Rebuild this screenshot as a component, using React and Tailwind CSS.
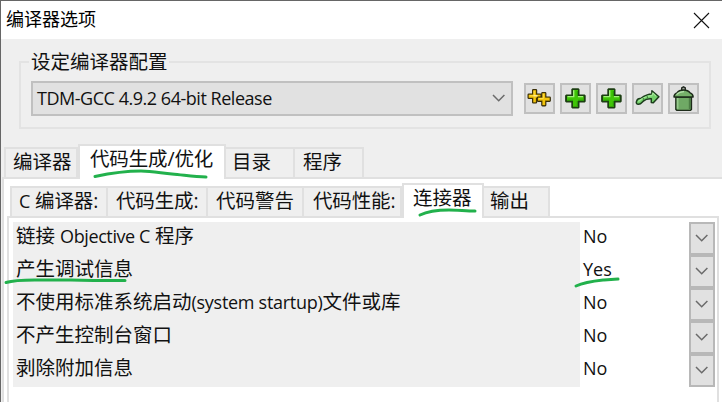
const CHEVRON = "m1 1 5.7 5.700L12.400 1";

function Chevron({ className = "" }) {
  return (
    <svg width="14" height="9" viewBox="0 0 14 9" fill="none" className={className}>
      <path d={CHEVRON} stroke="#6a6a6a" strokeWidth="1.5" />
    </svg>
  );
}

function Latin({ children, className = "" }) {
  return <span className={`text-[18px] ${className}`}>{children}</span>;
}

function IconButton({ children }) {
  return (
    <button className="flex h-[31px] w-[31px] items-center justify-center border-2 border-[#c0c0c0] bg-[#e1e1e1]">
      <svg width="25" height="25" viewBox="0 0 25 25" className="shrink-0">{children}</svg>
    </button>
  );
}

function PlusIcon() {
  return (
    <>
      <path d="M9.3 2.2h6.2l1 1v5.200h5.200l1 1v6l-1 1h-5.200v5.200l-1 1H9.3l-1-1v-5.200h-5.200l-1-1v-6l1-1h5.200V3.200z" fill="#1c3f12" />
      <path d="M10 3.900h5v6h5.800v4.800H15v6h-5v-6H4v-4.800h6z" fill="#40c507" />
      <path d="M10.700 4.300v6.300H4.600M15 10.600h5" fill="none" stroke="#a2f07c" strokeWidth="1.4" />
      <path d="M14.4 5v5m0 5v5.2M15 14.3h5.500M4.500 14.300H10" fill="none" stroke="#27980a" strokeWidth="1.1" />
    </>
  );
}

function DoublePlusIcon() {
  const cross = "M5.700 0h2.600v4.500h4.500v2.900H8.300v4.500H5.700V7.400H1.200V4.500h4.500z";
  return (
    <>
      {[[0.6, 4.3], [9.8, 7.2]].map(([x, y]) => (
        <g key={x} transform={`translate(${x} ${y})`}>
          <path d={cross} fill="#332a08" stroke="#332a08" strokeWidth="2.600" strokeLinejoin="round" />
          <path d={cross} fill="#f2c40b" stroke="#e3b50b" strokeWidth=".3" />
          <path d="M6.500.6v4.800H2" fill="none" stroke="#ffe04a" strokeWidth="1" />
        </g>
      ))}
      <path d="M6.600 9.800h4" stroke="#fff3b0" strokeWidth="1.200" />
    </>
  );
}

function ArrowIcon() {
  return (
    <>
      <path d="M1.600 15c.6-1.800 2-2.700 4-2.500 3.600-2.500 6.600-4.400 11.300-4.400V4.700l7 6-5.600 6.100-2-.4v-3.600c-3.600-.2-6 .4-8 2.300-1.500 1.500-2.600 3.300-4.800 3.200-1.900-.2-2.700-1.300-1.900-3.300z" fill="#72cf69" stroke="#1c3d1c" strokeWidth="1.500" strokeLinejoin="round" />
      <path d="M3.400 15.500c3.600-3.300 7.500-5.700 13.500-5.900l1-2.500 3 3" fill="none" stroke="#a5eb9b" strokeWidth="1.100" />
      <path d="m8 11.800.8 2M12 9.800l.6 2.500" stroke="#397b35" strokeWidth="1" />
    </>
  );
}

function BinIcon() {
  return (
    <>
      <path d="M10.700 4.200V1.900l1.800-1 1.800 1v2.300" fill="#a0a79c" stroke="#202820" strokeWidth="1.400" />
      <path d="M4.900 11h15.500v12.500l-1.200 1H6.100l-1.200-1z" fill="#6fa965" stroke="#1d2b1a" strokeWidth="1.500" />
      <path d="M6.600 12v10.800" stroke="#98cb8f" strokeWidth="1.800" />
      <path d="M18.700 12v11" stroke="#4c7d45" strokeWidth="1.800" />
      <path d="M3 11c.1-2.400 1-3.500 3-4.100 1.400-2 3-2.900 6.500-2.900s5.200.9 6.600 2.900c2 .6 2.900 1.700 3 4.100z" fill="#76b06a" stroke="#1d2b1a" strokeWidth="1.500" strokeLinejoin="round" />
      <path d="M5.500 8.600c2-2.100 4-2.900 7.500-2.900" fill="none" stroke="#b4dfaa" strokeWidth="1.300" />
    </>
  );
}

const base = "shrink-0 whitespace-nowrap border-t-2 border-r-2 border-[#e0e0e0] ";

function Tab({ children, className }) {
  return <div className={base + className}>{children}</div>;
}

const options = [
  [<>链接 <Latin className="tracking-[-0.4px]">Objective C</Latin> 程序</>, "No"],
  ["产生调试信息", "Yes"],
  [<>不使用标准系统启动<Latin className="tracking-[-0.28px]">(system startup)</Latin>文件或库</>, "No"],
  ["不产生控制台窗口", "No"],
  ["剥除附加信息", "No"],
];

function Annotations() {
  return (
    <svg className="pointer-events-none absolute -left-px -top-px z-20" width="722" height="402" fill="none" stroke="#22b14c" strokeWidth="3" strokeLinecap="round" strokeLinejoin="round">
      <path d="M95 176.500c14-3 29-5.500 46-5.500 11 0 20 2 31 3 12 1 22 3 34 3" />
      <path d="M420 215c8-4 18-5 29-5 9 0 17 1 26 1" />
      <path d="M6 282.500c10-3 23-2.500 35-2.500h30c18 .5 36 .5 54 .5" />
      <path d="M576 286c9-4 19-5 28-6l14-1" />
    </svg>
  );
}

export default function App() {
  return (
    <div className="relative flex h-[402px] w-[722px] flex-col overflow-hidden border-l border-t border-[#666] bg-[#efefef] font-['Open_Sans','Noto_Sans_CJK_SC',sans-serif] text-[19.5px] text-[#111]">
      <header className="flex h-[38px] shrink-0 items-center justify-between bg-white pl-[5px] pr-[12px]">
        <h1 className="text-[18px] leading-[34px] -mt-[3px] text-black">编译器选项</h1>
        <svg width="17" height="17" viewBox="0 0 17 17" stroke="#111" strokeWidth="1.1"><path d="m1 1 15 15M16 1 1 16" /></svg>
      </header>

      <section className="ml-[18px] mt-[22px] h-[68px] w-[692px] shrink-0 border-2 border-[#e3e3e3]">
        <div className="-mt-[13px] ml-[8px] h-[24px] w-[140px] whitespace-nowrap bg-[#efefef] pl-[2px] leading-[23px]">设定编译器配置</div>
        <div className="ml-[10px] mt-[7px] flex items-center">
          <div className="flex h-[35px] w-[482px] items-center justify-between border-2 border-[#c0c0c0] bg-[#e1e1e1] pl-[4px] pr-[5px]">
            <Latin className="tracking-[-0.47px]">TDM-GCC 4.9.2 64-bit Release</Latin>
            <Chevron />
          </div>
          <div className="ml-[11px] flex gap-[5px]">
            <IconButton><DoublePlusIcon /></IconButton>
            <IconButton><PlusIcon /></IconButton>
            <IconButton><PlusIcon /></IconButton>
            <IconButton><ArrowIcon /></IconButton>
            <IconButton><BinIcon /></IconButton>
          </div>
        </div>
      </section>

      <nav className="relative z-10 -mb-[2px] ml-[3px] mt-[15px] flex h-[35px] shrink-0 items-end leading-[26px]">
        <Tab className="h-[32px] w-[74px] border-b-2 border-l-2 border-r-0 pl-[7px]">编译器</Tab>
        <Tab className="h-[35px] w-[148px] border-l-2 bg-white pl-[10px] tracking-[-0.15px]">代码生成/优化</Tab>
        <Tab className="h-[32px] w-[69px] border-b-2 pl-[6px]">目录</Tab>
        <Tab className="h-[32px] w-[69px] border-b-2 pl-[8px]">程序</Tab>
      </nav>

      <main className="ml-[1px] flex grow flex-col border-l-2 border-t-2 border-[#e0e0e0] bg-white">
        <nav className="relative z-10 -mb-[2px] ml-[6px] mt-[4px] flex h-[35px] shrink-0 items-end leading-[26px]">
          <Tab className="h-[32px] w-[98px] border-b-2 border-l-2 bg-[#efefef] pl-[7px] tracking-[-0.15px]"><Latin>C</Latin> 编译器:</Tab>
          <Tab className="h-[32px] w-[100px] border-b-2 bg-[#efefef] pl-[8px] tracking-[-0.15px]">代码生成:</Tab>
          <Tab className="h-[32px] w-[96px] border-b-2 bg-[#efefef] pl-[8px]">代码警告</Tab>
          <Tab className="h-[32px] w-[98px] border-b-2 border-r-0 bg-[#efefef] pl-[9px] tracking-[-0.15px]">代码性能:</Tab>
          <Tab className="h-[35px] w-[82px] border-l-2 bg-white pl-[9px]">连接器</Tab>
          <Tab className="h-[32px] w-[66px] border-b-2 bg-[#efefef] pl-[6px]">输出</Tab>
        </nav>
        <div className="ml-[3px] mr-[3px] grow border-l-2 border-r-2 border-t-2 border-[#e0e0e0] pl-[4px] pr-[2px] pt-[4px]">
          {options.map(([label, value], i) => (
            <div key={i} className="flex h-[33px]">
              <div className="w-[567px] whitespace-nowrap bg-[#efefef] pl-[3px] leading-[27px]">{label}</div>
              <div className="grow pl-[3px] leading-[27px]"><Latin>{value}</Latin></div>
              <button className="flex h-[33px] w-[26px] items-center justify-center border-2 border-[#b8b8b8] bg-[#e1e1e1]"><Chevron /></button>
            </div>
          ))}
        </div>
      </main>
      <Annotations />
    </div>
  );
}
